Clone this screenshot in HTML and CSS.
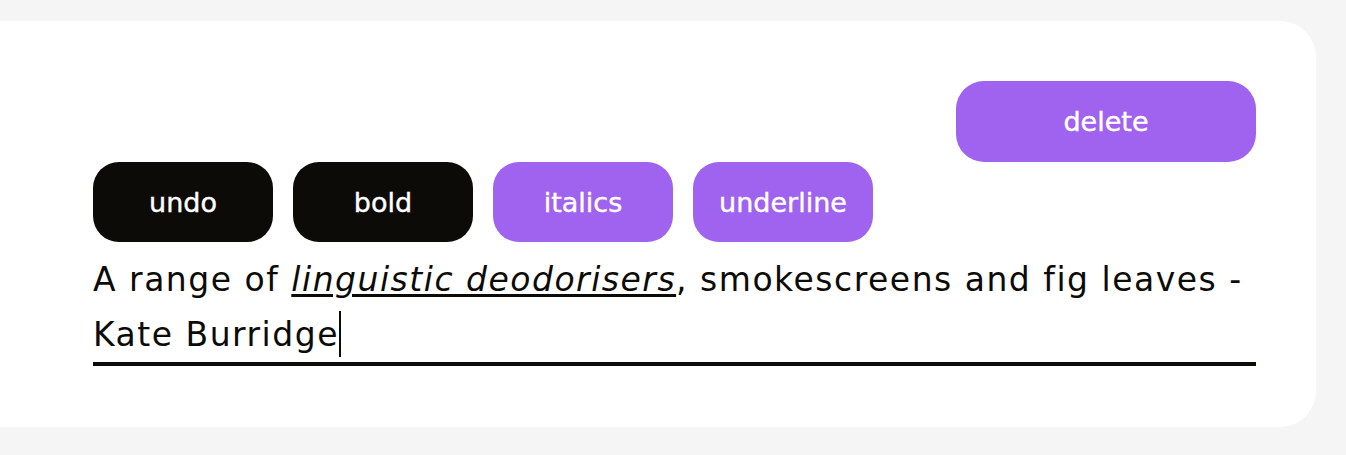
FILE: index.html
```html
<!DOCTYPE html>
<html lang="en">
<head>
<meta charset="utf-8">
<title>Editor</title>
<link rel="stylesheet" href="styles.css">
</head>
<body>
<main class="card">
  <div class="top-row">
    <button class="btn btn-purple btn-delete">delete</button>
  </div>
  <div class="toolbar">
    <button class="btn btn-dark">undo</button>
    <button class="btn btn-dark">bold</button>
    <button class="btn btn-purple">italics</button>
    <button class="btn btn-purple">underline</button>
  </div>
  <div class="editor">A range of <em class="fmt">linguistic deodorisers</em>, smokescreens and fig leaves - Kate Burridge<span class="caret"></span></div>
</main>
</body>
</html>
```

FILE: styles.css
```css
html, body {
  margin: 0;
  padding: 0;
  background: #f5f5f5;
}
body {
  padding: 21px 30px 28px 0;
  font-family: "DejaVu Sans", "Open Sans", sans-serif;
}
.card {
  background: #ffffff;
  border-radius: 0 36px 36px 0;
  padding: 60px 60px 61px 93px;
  display: flex;
  flex-direction: column;
}
.top-row {
  display: flex;
  justify-content: flex-end;
}
.btn {
  border: none;
  font-family: "DejaVu Sans", "Open Sans", sans-serif;
  font-size: 27px;
  font-weight: 400;
  color: #ffffff;
  width: 180px;
  height: 80px;
  border-radius: 26px;
  padding: 0;
  display: flex;
  align-items: center;
  justify-content: center;
  -webkit-text-stroke: 0.4px #ffffff;
}
.btn-delete {
  width: 300px;
  height: 81px;
  border-radius: 28px;
}
.btn-dark { background: #0d0b07; }
.btn-purple { background: #9f63f0; }
.toolbar {
  display: flex;
  gap: 20px;
}
.editor {
  margin-top: 10px;
  font-size: 33px;
  letter-spacing: 1.5px;
  line-height: 55px;
  color: #0d0b07;
  border-bottom: 4px solid #0d0b07;
}
.fmt {
  font-style: italic;
  text-decoration: underline;
  text-decoration-thickness: 3px;
  text-underline-offset: 3px;
}
.caret {
  display: inline-block;
  width: 2px;
  height: 46px;
  background: #0d0b07;
  vertical-align: -11px;
}
```
